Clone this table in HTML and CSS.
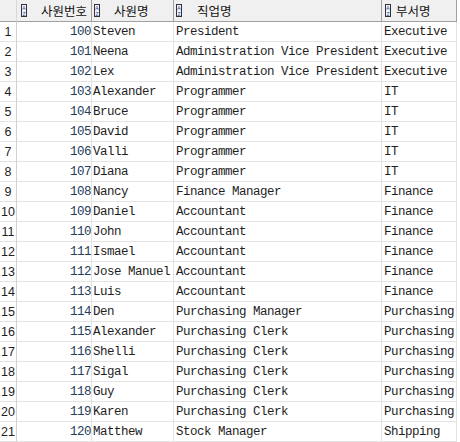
FILE: index.html
```html
<!DOCTYPE html>
<html>
<head>
<meta charset="utf-8">
<link rel="stylesheet" href="styles.css">
</head>
<body>
<div class="grid">
  <div class="hc hc0"></div>
  <div class="hc hc1"><svg class="ico" viewBox="0 0 6 13" width="6" height="13"><rect x="0.5" y="0.5" width="5" height="12" fill="#eef2fb" stroke="#333"/><text x="3" y="6" text-anchor="middle" font-size="5" font-family="Liberation Sans" fill="#2a3f8f">A</text><text x="3" y="11.5" text-anchor="middle" font-size="5" font-family="Liberation Sans" fill="#2a3f8f">Z</text></svg><span class="ht">사원번호</span></div>
  <div class="hc hc2"><svg class="ico" viewBox="0 0 6 13" width="6" height="13"><rect x="0.5" y="0.5" width="5" height="12" fill="#eef2fb" stroke="#333"/><text x="3" y="6" text-anchor="middle" font-size="5" font-family="Liberation Sans" fill="#2a3f8f">A</text><text x="3" y="11.5" text-anchor="middle" font-size="5" font-family="Liberation Sans" fill="#2a3f8f">Z</text></svg><span class="ht">사원명</span></div>
  <div class="hc hc3"><svg class="ico" viewBox="0 0 6 13" width="6" height="13"><rect x="0.5" y="0.5" width="5" height="12" fill="#eef2fb" stroke="#333"/><text x="3" y="6" text-anchor="middle" font-size="5" font-family="Liberation Sans" fill="#2a3f8f">A</text><text x="3" y="11.5" text-anchor="middle" font-size="5" font-family="Liberation Sans" fill="#2a3f8f">Z</text></svg><span class="ht">직업명</span></div>
  <div class="hc hc4"><svg class="ico" viewBox="0 0 6 13" width="6" height="13"><rect x="0.5" y="0.5" width="5" height="12" fill="#eef2fb" stroke="#333"/><text x="3" y="6" text-anchor="middle" font-size="5" font-family="Liberation Sans" fill="#2a3f8f">A</text><text x="3" y="11.5" text-anchor="middle" font-size="5" font-family="Liberation Sans" fill="#2a3f8f">Z</text></svg><span class="ht">부서명</span></div>

  <div class="c rn">1</div><div class="c id">100</div><div class="c tx">Steven</div><div class="c tx tj">President</div><div class="c tx tj">Executive</div>
  <div class="c rn">2</div><div class="c id">101</div><div class="c tx">Neena</div><div class="c tx tj">Administration Vice President</div><div class="c tx tj">Executive</div>
  <div class="c rn">3</div><div class="c id">102</div><div class="c tx">Lex</div><div class="c tx tj">Administration Vice President</div><div class="c tx tj">Executive</div>
  <div class="c rn">4</div><div class="c id">103</div><div class="c tx">Alexander</div><div class="c tx tj">Programmer</div><div class="c tx tj">IT</div>
  <div class="c rn">5</div><div class="c id">104</div><div class="c tx">Bruce</div><div class="c tx tj">Programmer</div><div class="c tx tj">IT</div>
  <div class="c rn">6</div><div class="c id">105</div><div class="c tx">David</div><div class="c tx tj">Programmer</div><div class="c tx tj">IT</div>
  <div class="c rn">7</div><div class="c id">106</div><div class="c tx">Valli</div><div class="c tx tj">Programmer</div><div class="c tx tj">IT</div>
  <div class="c rn">8</div><div class="c id">107</div><div class="c tx">Diana</div><div class="c tx tj">Programmer</div><div class="c tx tj">IT</div>
  <div class="c rn">9</div><div class="c id">108</div><div class="c tx">Nancy</div><div class="c tx tj">Finance Manager</div><div class="c tx tj">Finance</div>
  <div class="c rn">10</div><div class="c id">109</div><div class="c tx">Daniel</div><div class="c tx tj">Accountant</div><div class="c tx tj">Finance</div>
  <div class="c rn">11</div><div class="c id">110</div><div class="c tx">John</div><div class="c tx tj">Accountant</div><div class="c tx tj">Finance</div>
  <div class="c rn">12</div><div class="c id">111</div><div class="c tx">Ismael</div><div class="c tx tj">Accountant</div><div class="c tx tj">Finance</div>
  <div class="c rn">13</div><div class="c id">112</div><div class="c tx">Jose Manuel</div><div class="c tx tj">Accountant</div><div class="c tx tj">Finance</div>
  <div class="c rn">14</div><div class="c id">113</div><div class="c tx">Luis</div><div class="c tx tj">Accountant</div><div class="c tx tj">Finance</div>
  <div class="c rn">15</div><div class="c id">114</div><div class="c tx">Den</div><div class="c tx tj">Purchasing Manager</div><div class="c tx tj">Purchasing</div>
  <div class="c rn">16</div><div class="c id">115</div><div class="c tx">Alexander</div><div class="c tx tj">Purchasing Clerk</div><div class="c tx tj">Purchasing</div>
  <div class="c rn">17</div><div class="c id">116</div><div class="c tx">Shelli</div><div class="c tx tj">Purchasing Clerk</div><div class="c tx tj">Purchasing</div>
  <div class="c rn">18</div><div class="c id">117</div><div class="c tx">Sigal</div><div class="c tx tj">Purchasing Clerk</div><div class="c tx tj">Purchasing</div>
  <div class="c rn">19</div><div class="c id">118</div><div class="c tx">Guy</div><div class="c tx tj">Purchasing Clerk</div><div class="c tx tj">Purchasing</div>
  <div class="c rn">20</div><div class="c id">119</div><div class="c tx">Karen</div><div class="c tx tj">Purchasing Clerk</div><div class="c tx tj">Purchasing</div>
  <div class="c rn">21</div><div class="c id">120</div><div class="c tx">Matthew</div><div class="c tx tj">Stock Manager</div><div class="c tx tj">Shipping</div>
</div>
</body>
</html>
```
FILE: styles.css
```css
html, body {
  margin: 0;
  padding: 0;
  background: #ffffff;
}
.grid {
  display: grid;
  grid-template-columns: 17px 75px 82px 208px 75px;
  grid-template-rows: 22px;
  grid-auto-rows: 20px;
  width: 457px;
}
.hc {
  box-sizing: border-box;
  background: #f0f0f0;
  border-right: 1px solid #a0a0a0;
  border-bottom: 1px solid #a0a0a0;
  display: flex;
  align-items: center;
  font-family: "Noto Sans CJK KR", "Noto Sans", sans-serif;
  font-size: 12.5px;
  color: #111;
  white-space: nowrap;
  overflow: hidden;
}
.hc0 { border-right-color: #d8d8d8; }
.ico { flex: none; display: block; }
.hc1 .ico { margin-left: 4px; }
.hc1 .ht { margin-left: 14px; }
.hc2 .ico { margin-left: 2px; }
.hc2 .ht { margin-left: 14px; }
.hc3 .ico { margin-left: 2px; }
.hc3 .ht { margin-left: 15px; }
.hc4 .ico { margin-left: 3px; }
.hc4 .ht { margin-left: 5px; }
.c {
  box-sizing: border-box;
  border-right: 1px solid #e3e3e3;
  border-bottom: 1px solid #e3e3e3;
  font-family: "Liberation Mono", "DejaVu Sans Mono", monospace;
  font-size: 12.5px;
  letter-spacing: -0.5px;
  line-height: 17px;
  padding-top: 2px;
  color: #1e1e1e;
  white-space: nowrap;
  overflow: hidden;
}
.rn {
  text-align: center;
  font-family: "Liberation Sans", sans-serif;
  font-size: 12.5px;
  letter-spacing: 0;
  border-right-color: #d0d0d0;
}
.id {
  text-align: right;
  color: #243c5a;
}
.tx {
  padding-left: 1px;
}
.tj {
  padding-left: 2px;
}
```
